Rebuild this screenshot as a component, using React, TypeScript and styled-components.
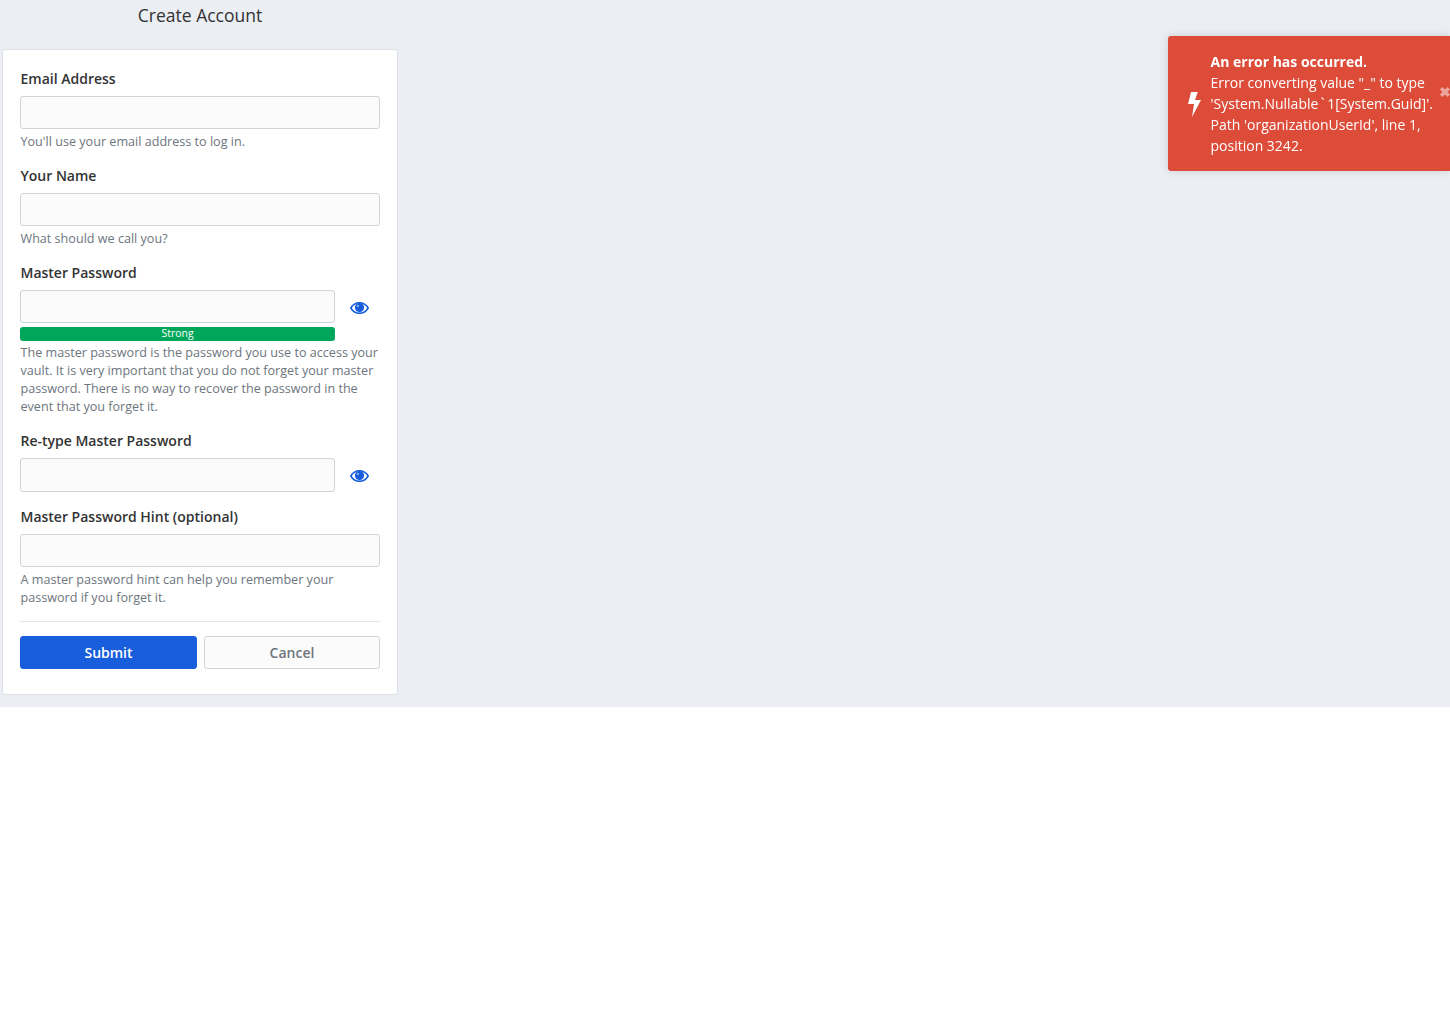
import styled, { createGlobalStyle } from "styled-components";

const GlobalStyle = createGlobalStyle`
  * {
    box-sizing: border-box;
  }

  body {
    margin: 0;
    background: #fff;
    color: #333;
    font-family: "Open Sans", "Liberation Sans", sans-serif;
    font-size: 14px;
    line-height: 21px;
  }
`;

function EyeIcon() {
  return (
    <svg width='19' height='12' viewBox='0 0 19 12'>
      <path
        d='M0.8 6C3 2.4 6 0.7 9.5 0.7S16 2.4 18.2 6C16 9.6 13 11.3 9.5 11.3S3 9.6 0.8 6Z'
        fill='none'
        stroke='currentColor'
        strokeWidth='1.5'
      />
      <circle cx='9.5' cy='5.6' r='4.6' fill='currentColor' />
      <circle cx='7.8' cy='3.9' r='1.2' fill='#8fb2ee' />
    </svg>
  );
}

export default function App() {
  return (
    <>
      <GlobalStyle />
      <Page>
        <Column>
          <Title>Create Account</Title>
          <Card>
            <Field>
              <Label>Email Address</Label>
              <Input type='email' />
              <Help>You'll use your email address to log in.</Help>
            </Field>
            <Field>
              <Label>Your Name</Label>
              <Input type='text' />
              <Help>What should we call you?</Help>
            </Field>
            <Field>
              <Label>Master Password</Label>
              <PasswordRow>
                <Input type='password' />
                <EyeButton type='button' aria-label='Toggle visibility'>
                  <EyeIcon />
                </EyeButton>
              </PasswordRow>
              <StrengthBar>Strong</StrengthBar>
              <Help $tight>
                The master password is the password you use to access your vault. It is very
                important that you do not forget your master password. There is no way to recover
                the password in the event that you forget it.
              </Help>
            </Field>
            <Field $compact>
              <Label>Re-type Master Password</Label>
              <PasswordRow>
                <Input type='password' $tall />
                <EyeButton type='button' aria-label='Toggle visibility'>
                  <EyeIcon />
                </EyeButton>
              </PasswordRow>
            </Field>
            <Field>
              <Label>Master Password Hint (optional)</Label>
              <Input type='text' />
              <Help>A master password hint can help you remember your password if you forget it.</Help>
            </Field>
            <Divider />
            <Actions>
              <SubmitButton type='submit'>Submit</SubmitButton>
              <CancelButton type='button'>Cancel</CancelButton>
            </Actions>
          </Card>
        </Column>
      </Page>
      <Toast>
        <ToastIcon>
          <svg width='13' height='25' viewBox='0 0 13 25'>
            <path d='M3 0H9.8L7 8H13L4 25L6 12H0Z' fill='currentColor' />
          </svg>
        </ToastIcon>
        <ToastBody>
          <ToastTitle>An error has occurred.</ToastTitle>
          <div>Error converting value "_" to type</div>
          <div>
            'System.Nullable<Tick>`</Tick>1[System.Guid]'.
          </div>
          <div>Path 'organizationUserId', line 1, position 3242.</div>
        </ToastBody>
        <ToastClose>
          <svg width='12' height='12' viewBox='0 0 12 12'>
            <path d='M2.2 2.2L9.8 9.8M9.8 2.2L2.2 9.8' stroke='currentColor' strokeWidth='3.6' />
          </svg>
        </ToastClose>
      </Toast>
    </>
  );
}

const Page = styled.main`
  height: 707px;
  background: #ebeef3;
`;

const Column = styled.div`
  width: 400px;
  padding: 0 2px;
`;

const Title = styled.h1`
  margin: 0;
  height: 49px;
  padding-top: 2px;
  font-size: 17.5px;
  font-weight: 400;
  line-height: 27px;
  text-align: center;
  color: #333;
`;

const Card = styled.form`
  height: 646px;
  padding: 18px 17px 0;
  background: #fff;
  border: 1px solid #dfe1e6;
  border-radius: 3px;
`;

const Field = styled.div<{ $compact?: boolean }>`
  margin-bottom: ${props => (props.$compact ? "14px" : "15px")};
`;

const Label = styled.label`
  display: block;
  margin-bottom: 6px;
  padding-left: 0.5px;
  height: 22px;
  font-size: 14px;
  font-weight: 600;
  line-height: 22px;
  color: #333;
`;

const Input = styled.input<{ $tall?: boolean }>`
  display: block;
  width: 100%;
  height: ${props => (props.$tall ? "34px" : "33px")};
  padding: 6px 10px;
  background: #fbfbfb;
  border: 1px solid #ced4da;
  border-radius: 3px;
  outline: none;
`;

const PasswordRow = styled.div`
  display: flex;
  align-items: center;

  ${Input} {
    flex: 1;
    width: auto;
    min-width: 0;
  }
`;

const EyeButton = styled.button`
  display: flex;
  align-items: center;
  justify-content: center;
  width: 45px;
  height: 33px;
  padding: 2px 0 0 4px;
  background: none;
  border: none;
  color: #175ddc;
`;

const StrengthBar = styled.div`
  width: 315px;
  height: 14px;
  margin-top: 4px;
  background: #00a65a;
  border-radius: 3px;
  color: #fff;
  font-size: 10.5px;
  line-height: 12px;
  text-align: center;
`;

const Help = styled.small<{ $tight?: boolean }>`
  display: block;
  margin-top: ${props => (props.$tight ? "3px" : "4px")};
  margin-bottom: -1px;
  padding-left: 0.5px;
  font-size: 12.6px;
  line-height: 18px;
  color: #6d757e;
`;

const Divider = styled.hr`
  height: 1px;
  margin: 0 0 14px;
  background: #e2e4e8;
  border: none;
`;

const Actions = styled.div`
  display: grid;
  grid-template-columns: 177px 176px;
  gap: 7px;
`;

const SubmitButton = styled.button`
  height: 33px;
  padding: 0;
  background: #175ddc;
  border: 1px solid #175ddc;
  border-radius: 3px;
  color: #fff;
  font: 600 14px "Open Sans", "Liberation Sans", sans-serif;
`;

const CancelButton = styled.button`
  height: 33px;
  padding: 0;
  background: #fbfbfb;
  border: 1px solid #ced4da;
  border-radius: 3px;
  color: #6d757e;
  font: 600 14px "Open Sans", "Liberation Sans", sans-serif;
`;

const Toast = styled.aside`
  position: fixed;
  top: 36px;
  right: 0;
  display: flex;
  align-items: center;
  width: 282px;
  height: 135px;
  padding: 15px 0 15px 20px;
  overflow: hidden;
  background: #dd4b39;
  border-radius: 3px 0 0 3px;
  box-shadow: 0 0 8px rgba(0, 0, 0, 0.15);
  color: #fff;
`;

const ToastIcon = styled.div`
  display: flex;
  flex: none;
  width: 13px;
  margin-top: 2px;
  margin-right: 9.5px;
`;

const ToastBody = styled.div`
  flex: none;
  width: 230px;
  font-size: 14px;
  line-height: 21px;
`;

const Tick = styled.span`
  display: inline-block;
  padding: 0 2.5px;
`;

const ToastTitle = styled.div`
  font-weight: 700;
`;

const ToastClose = styled.div`
  position: absolute;
  top: 50px;
  right: -1px;
  display: flex;
  opacity: 0.5;
`;
